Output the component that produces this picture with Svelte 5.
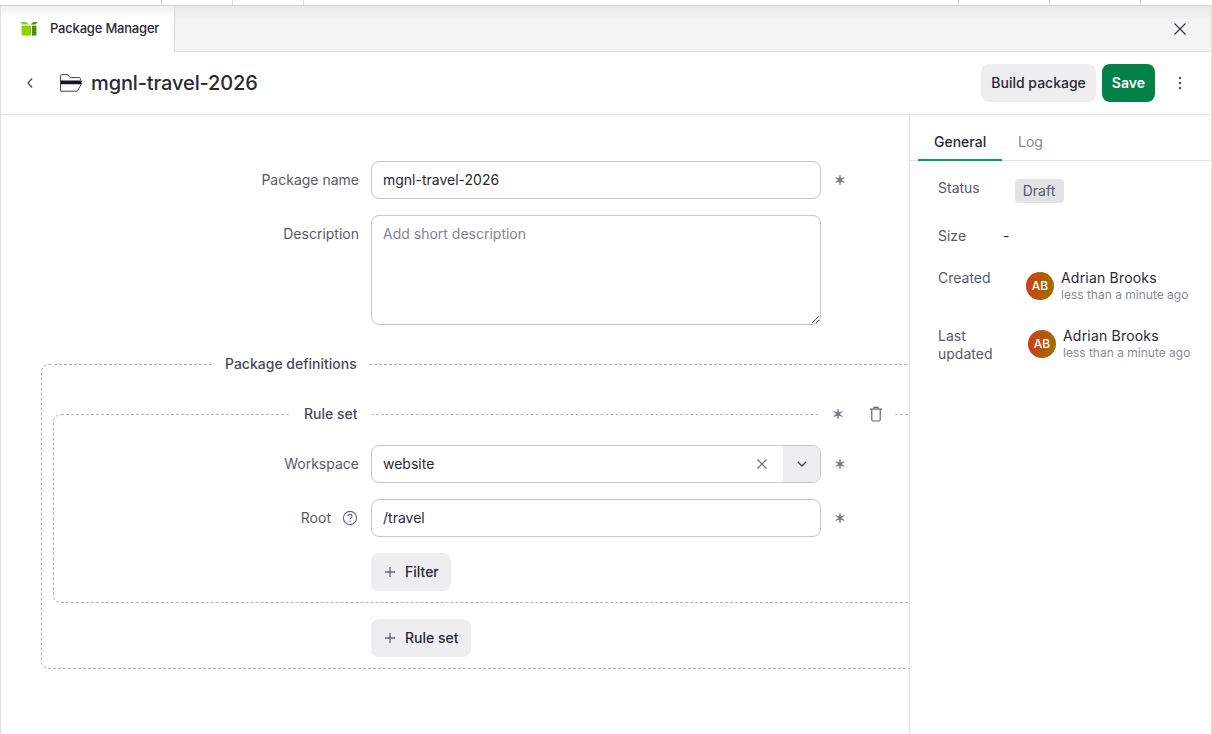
<script>
  const dividers = [161, 232, 303, 958, 1049, 1140];
  const meta = [
    { label: 'Created', offset: 34 },
    { label: 'Last updated', offset: 36 },
  ];
</script>

{#snippet asterisk()}
  <svg class="req" viewBox="0 0 12 12" width="12" height="12" aria-hidden="true">
    <path d="M6 1v10M1.7 3.5l8.6 5M10.3 3.5l-8.6 5" stroke="#7c7b8b" stroke-width="1.3" fill="none" />
    <circle cx="6" cy="6" r="2.4" fill="#7c7b8b" />
  </svg>
{/snippet}

{#snippet plus()}
  <svg viewBox="0 0 12 12" width="12" height="12" aria-hidden="true">
    <path d="M6 1v10M1 6h10" stroke="#66657a" stroke-width="1.3" fill="none" />
  </svg>
{/snippet}

<div class="strip">
  {#each dividers as x}
    <span class="tick" style="left: {x}px"></span>
  {/each}
</div>

<div class="shell">
  <div class="tabbar">
    <div class="tab">
      <svg viewBox="0 0 18 15" width="18" height="15" aria-hidden="true">
        <path d="M0 1h6l2.6 2.6H2.6z" fill="#8cc63f" />
        <path d="M17.6 1h-4.4l-2.4 2.6h4.6z" fill="#4f8a10" />
        <rect x="1.6" y="4.6" width="9.4" height="10" fill="#8fd100" />
        <rect x="12" y="4.6" width="4.4" height="10" fill="#4f8f00" />
      </svg>
      <span>Package Manager</span>
    </div>
    <button class="close" aria-label="Close">
      <svg viewBox="0 0 14 14" width="14" height="14"><path d="M1.5 1.5l11 11M12.5 1.5l-11 11" stroke="#33323d" stroke-width="1.1" fill="none" /></svg>
    </button>
  </div>

  <header class="head">
    <svg class="back" viewBox="0 0 8 12" width="8" height="12" aria-hidden="true"><path d="M6 1.5L2 6l4 4.5" stroke="#55545f" stroke-width="1.4" fill="none" /></svg>
    <svg class="folder" viewBox="0 0 23 18" width="23" height="18" aria-hidden="true">
      <path d="M.6 17V1.6c0-.6.4-1 1-1h6l2.4 3h9.4c.6 0 1 .4 1 1V6" stroke="#44434f" stroke-width="1" fill="none" />
      <path d="M.6 6.6h21.8l-1.4 3.6H.6z" fill="#17161d" />
      <path d="M.6 17.2h16.8l4.4-8" stroke="#44434f" stroke-width="1" fill="none" />
    </svg>
    <h1>mgnl-travel-2026</h1>
    <div class="actions">
      <button class="btn">Build package</button>
      <button class="btn primary">Save</button>
      <svg class="more" viewBox="0 0 4 14" width="4" height="14" aria-hidden="true">
        <circle cx="2" cy="2" r="1.3" fill="#55545f" /><circle cx="2" cy="7" r="1.3" fill="#55545f" /><circle cx="2" cy="12" r="1.3" fill="#55545f" />
      </svg>
    </div>
  </header>

  <div class="body">
    <main class="main">
      <div class="row top">
        <label class="lbl" for="pn">Package name</label>
        <input id="pn" class="field" value="mgnl-travel-2026" />
        {@render asterisk()}
      </div>
      <div class="row top area">
        <label class="lbl" for="desc">Description</label>
        <textarea id="desc" class="field" placeholder="Add short description"></textarea>
      </div>

      <fieldset class="group outer">
        <legend>Package definitions</legend>
        <fieldset class="group inner">
          <legend>Rule set</legend>
          <div class="set-tools">
            {@render asterisk()}
            <svg viewBox="0 0 14 16" width="14" height="16" aria-hidden="true">
              <path d="M1 3.2h12M5 3V1.4h4V3M2.8 3.2v10.6c0 .7.5 1.2 1.2 1.2h6c.7 0 1.2-.5 1.2-1.2V3.2" stroke="#66657a" stroke-width="1.2" fill="none" />
            </svg>
          </div>
          <div class="row first">
            <label class="lbl" for="ws">Workspace</label>
            <div class="select">
              <input id="ws" value="website" />
              <svg class="clear" viewBox="0 0 12 12" width="12" height="12" aria-hidden="true"><path d="M1.5 1.5l9 9M10.5 1.5l-9 9" stroke="#66657a" stroke-width="1.2" fill="none" /></svg>
              <span class="caret">
                <svg viewBox="0 0 10 6" width="10" height="6" aria-hidden="true"><path d="M1 1l4 4 4-4" stroke="#44434f" stroke-width="1.4" fill="none" /></svg>
              </span>
            </div>
            {@render asterisk()}
          </div>
          <div class="row">
            <label class="lbl root" for="root">
              <span class="root-text">Root</span>
              <svg class="help" viewBox="0 0 16 16" width="16" height="16" aria-hidden="true">
                <circle cx="8" cy="8" r="6.6" stroke="#66657a" stroke-width="1.1" fill="none" />
                <path d="M6 6.3c0-1.2.9-1.9 2-1.9s2 .7 2 1.8c0 1.6-2 1.5-2 3" stroke="#66657a" stroke-width="1.1" fill="none" />
                <circle cx="8" cy="11.3" r=".7" fill="#66657a" />
              </svg>
            </label>
            <input id="root" class="field" value="/travel" />
            {@render asterisk()}
          </div>
          <div class="row">
            <span class="lbl"></span>
            <button class="btn add">{@render plus()}<span class="add-text">Filter</span></button>
          </div>
        </fieldset>
        <div class="row outer-add">
          <span class="lbl"></span>
          <button class="btn add">{@render plus()}<span class="add-text">Rule set</span></button>
        </div>
      </fieldset>
    </main>

    <aside class="side">
      <nav class="tabs">
        <span class="stab on">General</span>
        <span class="stab">Log</span>
      </nav>
      <div class="info status"><span class="key">Status</span><span class="badge">Draft</span></div>
      <div class="info size"><span class="key">Size</span><span class="dash">-</span></div>
      {#each meta as m}
        <div class="info person">
          <span class="key">{m.label}</span>
          <span class="avatar" style="margin-left: {m.offset}px">AB</span>
          <span class="who">
            <span class="name">Adrian Brooks</span>
            <span class="when">less than a minute ago</span>
          </span>
        </div>
      {/each}
    </aside>
  </div>
</div>

<style>
  :global(body) {
    margin: 0;
    background: #fff;
    font-family: Inter, "Liberation Sans", sans-serif;
    color: #2a2932;
    overflow: hidden;
  }

  .strip {
    position: relative;
    height: 5px;
    border-bottom: 1px solid #d4d4d8;
  }

  .tick {
    position: absolute;
    top: 0;
    width: 1px;
    height: 5px;
    background: #dedee2;
  }

  .shell {
    height: 728px;
    box-sizing: border-box;
    border-left: 1px solid #e2e2e6;
    border-right: 1px solid #e2e2e6;
    display: flex;
    flex-direction: column;
  }

  .tabbar {
    height: 46px;
    flex: none;
    box-sizing: border-box;
    display: flex;
    align-items: stretch;
    justify-content: space-between;
    background: linear-gradient(#e9e9ea, #f3f3f4 14px, #f4f4f5);
    border-bottom: 1px solid #dcdce0;
  }

  .tab {
    width: 174px;
    height: 46px;
    box-sizing: border-box;
    display: flex;
    align-items: center;
    gap: 12px;
    padding: 0 0 2px 19px;
    background: linear-gradient(#f0f0f1, #fff 12px);
    border-right: 1px solid #dcdce0;
    font-size: 13px;
    font-weight: 500;
    letter-spacing: -0.2px;
  }

  .close {
    width: 62px;
    background: none;
    border: 0;
    padding: 0;
    display: flex;
    align-items: center;
    justify-content: center;
  }

  .head {
    height: 63px;
    flex: none;
    box-sizing: border-box;
    display: flex;
    align-items: center;
    padding: 0 29px 1px 25px;
    border-bottom: 1px solid #e2e2e6;
  }

  .folder {
    margin-left: 26px;
  }

  h1 {
    margin: 0 0 0 8px;
    font-size: 20px;
    font-weight: 500;
    line-height: 26px;
    letter-spacing: -0.12px;
  }

  .actions {
    margin-left: auto;
    display: flex;
    align-items: center;
    gap: 6px;
  }

  .more {
    margin-left: 17px;
  }

  .btn {
    height: 38px;
    padding: 0 10px;
    border: 0;
    border-radius: 8px;
    background: #eeeef0;
    color: #2a2932;
    font: 500 14px Inter, "Liberation Sans", sans-serif;
    display: inline-flex;
    align-items: center;
  }

  .primary {
    padding: 0 10px;
    background: #048147;
    color: #fff;
    font-weight: 600;
  }

  .add {
    gap: 9px;
    padding: 0 12px 0 13px;
  }

  .add-text {
    padding-bottom: 2px;
  }

  .body {
    flex: 1;
    min-height: 0;
    display: flex;
  }

  .main {
    width: 908px;
    flex: none;
    box-sizing: border-box;
    padding: 46px 0 0 40px;
    overflow: hidden;
  }

  .row {
    display: flex;
    align-items: center;
    gap: 12px;
    min-height: 38px;
  }

  .row + .row {
    margin-top: 16px;
  }

  .lbl {
    width: 305px;
    flex: none;
    box-sizing: border-box;
    display: flex;
    align-items: center;
    justify-content: flex-end;
    gap: 11px;
    padding-bottom: 2px;
    font-size: 14px;
    color: #5b5a68;
  }

  .top .lbl {
    width: 318px;
  }

  .root {
    padding: 0 1px 0 0;
  }

  .root-text {
    padding-bottom: 2px;
  }

  .area {
    align-items: flex-start;
  }

  .top.area .lbl {
    padding-bottom: 0;
    line-height: 38px;
  }

  .field {
    width: 450px;
    height: 38px;
    box-sizing: border-box;
    border: 1px solid #c6c6cd;
    border-radius: 8px;
    padding: 0 11px 1px;
    font: 14px Inter, "Liberation Sans", sans-serif;
    color: #2a2932;
    background: #fff;
    outline: 0;
  }

  textarea.field {
    height: 110px;
    display: block;
    padding-top: 9px;
    line-height: 17px;
    resize: vertical;
  }

  textarea::placeholder {
    color: #85848f;
    opacity: 1;
  }

  .req {
    flex: none;
    margin-left: 1px;
  }

  .group {
    margin: 0;
    min-width: 0;
    border: 1px dashed #b4b4bc;
    border-radius: 8px;
    position: relative;
  }

  .group legend {
    font-size: 14px;
    font-weight: 500;
    color: #4a4955;
    line-height: 15px;
    padding-bottom: 2px;
  }

  .outer {
    width: 900px;
    box-sizing: border-box;
    margin-top: 31px;
    padding: 0 0 0 11px;
    height: 313px;
  }

  .outer > legend {
    margin-left: 160px;
    padding-left: 12px;
    padding-right: 12px;
  }

  .inner {
    width: 890px;
    box-sizing: border-box;
    margin-top: 33px;
    height: 197px;
    padding: 0;
  }

  .inner > legend {
    margin-left: 236px;
    padding-left: 14px;
    padding-right: 14px;
  }

  .first {
    margin-top: 22px;
  }

  .set-tools {
    position: absolute;
    left: 765px;
    top: -17px;
    width: 76px;
    height: 16px;
    padding-left: 12px;
    box-sizing: border-box;
    background: #fff;
    display: flex;
    align-items: center;
    gap: 25px;
  }

  .select {
    width: 450px;
    height: 38px;
    box-sizing: border-box;
    flex: none;
    display: flex;
    align-items: center;
    border: 1px solid #c6c6cd;
    border-radius: 8px;
    overflow: hidden;
  }

  .select input {
    flex: 1;
    min-width: 0;
    border: 0;
    padding: 0 11px 1px;
    font: 14px Inter, "Liberation Sans", sans-serif;
    color: #2a2932;
    outline: 0;
  }

  .clear {
    margin-right: 15px;
  }

  .caret {
    width: 37px;
    height: 100%;
    background: #eeeef0;
    display: flex;
    align-items: center;
    justify-content: center;
  }

  .outer-add {
    margin-top: 16px;
  }

  .outer-add .lbl {
    width: 306px;
  }

  .side {
    flex: 1;
    border-left: 1px solid #e2e2e6;
    font-size: 14px;
  }

  .tabs {
    height: 46px;
    box-sizing: border-box;
    padding-left: 8px;
    display: flex;
    border-bottom: 1px solid #e2e2e6;
  }

  .stab {
    padding: 0 16px;
    line-height: 54px;
    height: 46px;
    box-sizing: border-box;
    color: #8a8996;
    width: 56px;
  }

  .stab.on {
    width: 84px;
    color: #2a2932;
    font-weight: 500;
    border-bottom: 2px solid #05a35c;
  }

  .info {
    display: flex;
    padding-left: 28px;
  }

  .key {
    color: #5b5a68;
    line-height: 18px;
  }

  .status {
    margin-top: 18px;
  }

  .badge {
    margin-left: 35px;
    height: 24px;
    padding: 0 9px 0 8px;
    line-height: 24px;
    border-radius: 4px;
    background: #e2e2e7;
    color: #5b5a68;
  }

  .size {
    margin-top: 24px;
  }

  .dash {
    margin-left: 37px;
    line-height: 18px;
  }

  .person {
    margin-top: 24px;
  }

  .person + .person {
    margin-top: 24px;
  }

  .person .key {
    width: 54px;
  }

  .avatar {
    width: 28px;
    height: 28px;
    margin-top: 3px;
    flex: none;
    border-radius: 50%;
    background: linear-gradient(90deg, #ce3f14, #9f6f00);
    color: #fff;
    font-size: 12px;
    font-weight: 500;
    line-height: 28px;
    text-align: center;
  }

  .who {
    margin-left: 7px;
    display: flex;
    flex-direction: column;
  }

  .name {
    line-height: 18px;
    color: #2a2932;
    letter-spacing: 0.2px;
  }

  .when {
    font-size: 12px;
    line-height: 16px;
    color: #8a8996;
  }
</style>
